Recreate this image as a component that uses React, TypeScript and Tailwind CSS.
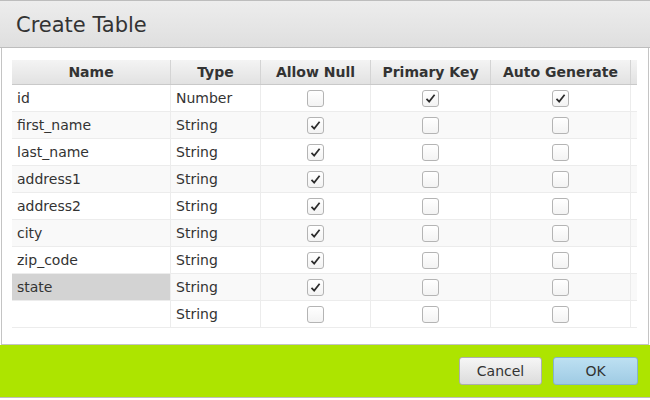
const rows = [
  { name: "id", type: "Number", nul: false, pk: true, auto: true },
  { name: "first_name", type: "String", nul: true, pk: false, auto: false },
  { name: "last_name", type: "String", nul: true, pk: false, auto: false },
  { name: "address1", type: "String", nul: true, pk: false, auto: false },
  { name: "address2", type: "String", nul: true, pk: false, auto: false },
  { name: "city", type: "String", nul: true, pk: false, auto: false },
  { name: "zip_code", type: "String", nul: true, pk: false, auto: false },
  { name: "state", type: "String", nul: true, pk: false, auto: false, selected: true },
  { name: "", type: "String", nul: false, pk: false, auto: false },
];

function CheckBox({ checked }: { checked: boolean }) {
  return (
    <div className="w-[17px] h-[17px] rounded-[3px] border border-[#b4b4b4] bg-gradient-to-b from-white to-[#f3f3f3] flex items-center justify-center">
      {checked && (
        <svg width="13" height="13" viewBox="0 0 13 13">
          <path d="M2.5 6.8 L5.2 9.6 L10.6 2.8" fill="none" stroke="#2b2b2b" strokeWidth="1.7" />
        </svg>
      )}
    </div>
  );
}

function HeadCell({ w, label }: { w: string; label?: string }) {
  return (
    <div className={`${w} h-full flex items-center justify-center border-r border-[#d4d4d4] font-bold`}>
      {label}
    </div>
  );
}

export default function App() {
  return (
    <div className="w-[650px] h-[400px] bg-white flex flex-col text-[14px] text-[#333] font-['DejaVu_Sans',sans-serif]">
      <div className="h-[48px] shrink-0 border-t border-b border-[#bdbdbd] bg-gradient-to-b from-[#ededed] to-[#dfdfdf] flex items-center pl-4 pt-[2px]">
        <span className="text-[21px] text-[#333] leading-none">Create Table</span>
      </div>

      <div className="flex-1 mx-[1px] border-x border-b border-[#c4c4c4] pt-[12px] px-[10px]">
        <div className="w-[625px]">
          <div className="h-[25px] flex border-b border-[#c9c9c9] bg-gradient-to-b from-[#f4f4f4] to-[#e2e2e2]">
            <HeadCell w="w-[159px]" label="Name" />
            <HeadCell w="w-[90px]" label="Type" />
            <HeadCell w="w-[110px]" label="Allow Null" />
            <HeadCell w="w-[120px]" label="Primary Key" />
            <HeadCell w="w-[140px]" label="Auto Generate" />
            <div className="w-[6px]" />
          </div>
          {rows.map((r, i) => (
            <div
              key={i}
              className={`h-[27px] flex border-b border-[#ececec] ${i % 2 === 1 ? "bg-[#f9f9f9]" : "bg-white"}`}
            >
              <div
                className={`w-[159px] h-full flex items-center pl-[5px] border-r border-[#ececec] ${r.selected ? "bg-[#d3d3d3]" : ""}`}
              >
                {r.name}
              </div>
              <div className="w-[90px] h-full flex items-center pl-[5px] border-r border-[#ececec]">{r.type}</div>
              <div className="w-[110px] h-full flex items-center justify-center border-r border-[#ececec]">
                <CheckBox checked={r.nul} />
              </div>
              <div className="w-[120px] h-full flex items-center justify-center border-r border-[#ececec]">
                <CheckBox checked={r.pk} />
              </div>
              <div className="w-[140px] h-full flex items-center justify-center border-r border-[#ececec]">
                <CheckBox checked={r.auto} />
              </div>
              <div className="w-[6px]" />
            </div>
          ))}
        </div>
      </div>

      <div className="h-[53px] shrink-0 bg-[#ade400] border-b border-[#bdbdbd] mb-[2px] flex items-center justify-end gap-[11px] pr-[12px]">
        <button className="w-[83px] h-[28px] rounded-[3px] border border-[#aeaeae] bg-gradient-to-b from-[#f6f6f6] to-[#dcdcdc] text-[#333]">
          Cancel
        </button>
        <button className="w-[85px] h-[28px] rounded-[3px] border border-[#85b3cf] bg-gradient-to-b from-[#bde0f2] to-[#9fcbe4] text-[#333]">
          OK
        </button>
      </div>
    </div>
  );
}
